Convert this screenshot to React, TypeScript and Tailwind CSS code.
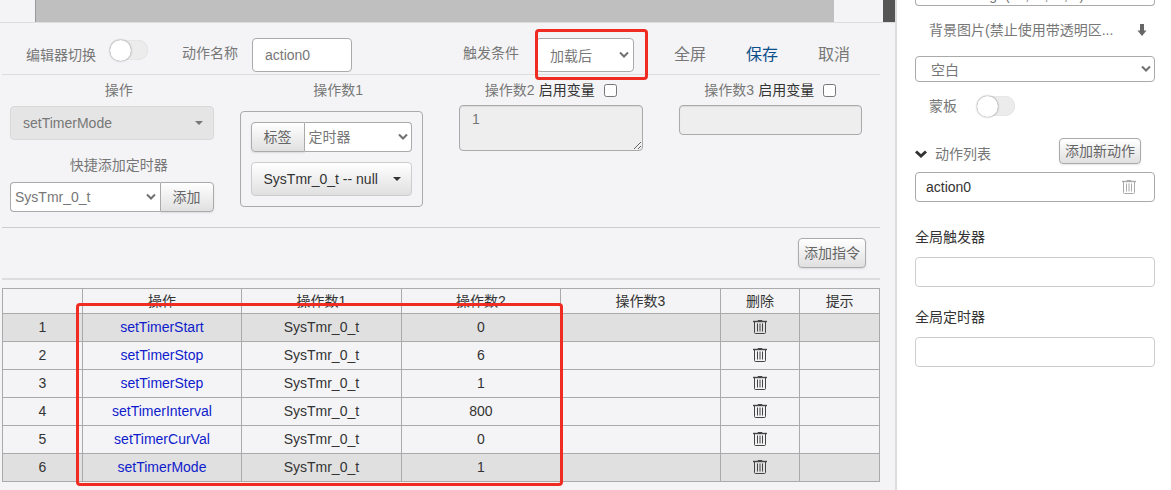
import { useState } from 'react';

const HAN = 'text-sm leading-5 text-[#777]';
const FIELD = 'rounded border border-[#aaa] bg-white text-sm text-[#777] outline-none';
const RAISED =
  'border border-[#aaa] bg-linear-to-b from-white to-[#e0e0e0] text-sm text-[#666] shadow-[0_1px_2px_rgba(0,0,0,0.1)]';
const CELL = 'border border-[#aaa] p-0 pb-0.5';

function Chevron({ className = '' }: { className?: string }) {
  return (
    <svg className={className} width="10" height="8" viewBox="0 0 10 8" fill="none" aria-hidden="true">
      <path d="M1 1.5 5 5.5 9 1.5" stroke="#707070" strokeWidth="2" />
    </svg>
  );
}

function Select({
  label,
  options,
  wrap = '',
  className = '',
  arrow = 'right-1',
}: {
  label: string;
  options: string[];
  wrap?: string;
  className?: string;
  arrow?: string;
}) {
  return (
    <span className={`relative flex items-center ${wrap}`}>
      <select aria-label={label} className={`w-full appearance-none ${FIELD} ${className}`}>
        {options.map((o) => (
          <option key={o}>{o}</option>
        ))}
      </select>
      <Chevron className={`pointer-events-none absolute ${arrow}`} />
    </span>
  );
}

function Toggle({ label }: { label: string }) {
  const [on, setOn] = useState(false);
  return (
    <label className="relative flex h-5 w-[38px] shrink-0 cursor-pointer items-center rounded-full bg-[#ececec] shadow-[inset_0_0_1px_rgba(0,0,0,0.2)]">
      <input
        type="checkbox"
        aria-label={label}
        checked={on}
        onChange={(e) => setOn(e.target.checked)}
        className="peer absolute inset-0 appearance-none"
      />
      <span className="pointer-events-none relative size-[21px] rounded-full bg-white shadow-[0_0_2px_rgba(0,0,0,0.55)] peer-checked:translate-x-[17px]" />
    </label>
  );
}

function Trash({ color }: { color: string }) {
  return (
    <svg width="14" height="16" viewBox="0 0 14 16" fill="none" stroke={color} aria-hidden="true">
      <path d="M0 2.5H14" strokeWidth="1.4" />
      <path d="M5 2V1.5H9V2" />
      <path d="M1.5 3V13.5Q1.5 14.5 2.5 14.5H11.5Q12.5 14.5 12.5 13.5V3" />
      <path d="M4.5 4.5V12.5M7 4.5V12.5M9.5 4.5V12.5" />
    </svg>
  );
}

function Caret({ className = '' }: { className?: string }) {
  return (
    <svg className={className} width="8" height="4" viewBox="0 0 8 4" fill="currentColor" aria-hidden="true">
      <path d="M0 0H8L4 4Z" />
    </svg>
  );
}

const ROWS = [
  ['setTimerStart', '0'],
  ['setTimerStop', '6'],
  ['setTimerStep', '1'],
  ['setTimerInterval', '800'],
  ['setTimerCurVal', '0'],
  ['setTimerMode', '1'],
];

const HEADS = ['', '操作', '操作数1', '操作数2', '操作数3', '删除', '提示'];

function Toolbar() {
  return (
    <div className="flex items-start justify-between border-b border-[#ddd] pt-[15px] pr-[30px] pb-0.5 pl-6">
      <div className="flex items-start">
        <span className={`mt-[7px] mr-3.5 ${HAN}`}>编辑器切换</span>
        <span className="mt-0.5">
          <Toggle label="编辑器切换" />
        </span>
        <label htmlFor="action-name" className={`mt-[5px] mr-3.5 ml-[34px] ${HAN}`}>
          动作名称
        </label>
        <input id="action-name" defaultValue="action0" className={`h-[34px] w-[100px] px-3 ${FIELD}`} />
      </div>
      <div className="flex items-start">
        <span className={`mt-[5px] mr-[17px] ${HAN}`}>触发条件</span>
        <span className="relative">
          <Select
            label="触发条件"
            options={['加载后', '加载前']}
            wrap="w-[98px]"
            className="h-[34px] pt-0.5 pl-[13px]"
            arrow="right-[5px]"
          />
          <span className="pointer-events-none absolute -top-[9px] -right-3.5 -bottom-2 -left-px rounded-sm border-3 border-[#ef2b22]" />
        </span>
        <div className="mt-[7px] ml-10 flex gap-10 text-base leading-5 text-[#777]">
          <button type="button">全屏</button>
          <button type="button" className="text-[#0b4f8a]">
            保存
          </button>
          <button type="button">取消</button>
        </div>
      </div>
    </div>
  );
}

function VariableLabel({ name, id }: { name: string; id: string }) {
  return (
    <div className="mb-[5px] flex h-5 items-center justify-center text-sm leading-5">
      <label htmlFor={id} className="text-[#777]">
        {name}
      </label>
      <label htmlFor={`${id}-var`} className="ml-1 text-[#333]">
        启用变量
      </label>
      <input id={`${id}-var`} type="checkbox" className="ml-[9px] size-[13px]" />
    </div>
  );
}

function Operands() {
  return (
    <div className="grid grid-cols-4 border-b border-[#ccc] pt-[5px] pb-[15px]">
      <div className="px-2">
        <div className={`pl-3.5 text-center ${HAN}`}>操作</div>
        <button
          type="button"
          className="mt-[6px] flex h-[34px] w-full items-center justify-between rounded border border-[#d9d9d9] bg-[#e5e5e5] pr-2.5 pl-3 text-sm text-[#777]"
        >
          setTimerMode
          <Caret />
        </button>
        <div className={`mt-[15px] pl-3.5 text-center ${HAN}`}>快捷添加定时器</div>
        <div className="mt-[7px] flex">
          <Select
            label="快捷添加定时器"
            options={['SysTmr_0_t']}
            wrap="min-w-0 flex-1"
            className="h-[30px] rounded-r-none border-r-0 pl-1"
          />
          <button type="button" className={`h-[30px] w-[54px] rounded-r ${RAISED}`}>
            添加
          </button>
        </div>
      </div>
      <div className="px-[18px]">
        <div className={`pl-3.5 text-center ${HAN}`}>操作数1</div>
        <div className="mt-[11px] rounded border border-[#aaa] p-2.5">
          <div className="flex">
            <button type="button" className={`h-[30px] w-[54px] rounded-l ${RAISED}`}>
              标签
            </button>
            <Select
              label="操作数1类型"
              options={['定时器', '变量']}
              wrap="min-w-0 flex-1"
              className="h-[30px] rounded-l-none border-l-0 pl-1"
            />
          </div>
          <button
            type="button"
            className="mt-2.5 flex h-[34px] w-full items-center justify-between rounded border border-[#ccc] bg-linear-to-b from-white to-[#e0e0e0] pr-2.5 pl-3 text-sm text-[#333]"
          >
            SysTmr_0_t -- null
            <Caret />
          </button>
        </div>
      </div>
      <div className="px-[18px]">
        <VariableLabel name="操作数2" id="op2" />
        <textarea
          id="op2"
          defaultValue="1"
          className="block h-[46px] w-full rounded border border-[#aaa] bg-[#eee] px-3 py-[3px] text-sm leading-5 text-[#777] shadow-[inset_0_1px_1px_rgba(0,0,0,0.08)]"
        />
      </div>
      <div className="px-[18px]">
        <VariableLabel name="操作数3" id="op3" />
        <input
          id="op3"
          className="block h-[30px] w-full rounded border border-[#aaa] bg-[#eee] px-3 text-sm text-[#777] shadow-[inset_0_1px_1px_rgba(0,0,0,0.08)]"
        />
      </div>
    </div>
  );
}

function Instructions() {
  return (
    <div className="relative mt-2">
      <table className="w-full table-fixed border-collapse text-center text-sm leading-5 text-[#333]">
        <colgroup>
          <col className="w-1/11" />
          <col className="w-2/11" />
          <col className="w-2/11" />
          <col className="w-2/11" />
          <col className="w-2/11" />
          <col className="w-1/11" />
          <col className="w-1/11" />
        </colgroup>
        <thead>
          <tr className="h-[25px]">
            {HEADS.map((h) => (
              <th key={h} className="border border-[#aaa] p-0 font-normal">
                {h}
              </th>
            ))}
          </tr>
        </thead>
        <tbody>
          {ROWS.map(([name, value], i) => (
            <tr key={name} className={`h-7 ${i === 0 || i === 5 ? 'bg-[#e0e0e0]' : ''}`}>
              <td className={CELL}>{i + 1}</td>
              <td className={CELL}>
                <a href="#" className="text-[#0f1ccc]">
                  {name}
                </a>
              </td>
              <td className={CELL}>SysTmr_0_t</td>
              <td className={CELL}>{value}</td>
              <td className={CELL} />
              <td className={CELL}>
                <button type="button" aria-label="删除" className="block w-full">
                  <span className="flex justify-center">
                    <Trash color="#444" />
                  </span>
                </button>
              </td>
              <td className={CELL} />
            </tr>
          ))}
        </tbody>
      </table>
      <span className="pointer-events-none absolute top-[15px] -bottom-1 left-[74px] w-[487px] rounded-sm border-3 border-[#ef2b22]" />
    </div>
  );
}

function Properties() {
  return (
    <aside className="w-[276px] shrink-0 border-l-2 border-[#ddd] bg-white pr-4 pl-[18px]">
      <div className="flex h-1.5 items-end overflow-hidden rounded-b border border-t-0 border-[#aaa] pl-[50px] text-sm leading-5 text-[#777]">
        Image(url,url,url,...)
      </div>
      <div className={`mt-3.5 flex items-center justify-between pr-2 pl-3.5 ${HAN}`}>
        <label htmlFor="bg">背景图片(禁止使用带透明区...</label>
        <svg width="10" height="12" viewBox="0 0 10 12" fill="#666" aria-hidden="true">
          <path d="M3 0H7V6.5H9.5L5 12L0.5 6.5H3Z" />
        </svg>
      </div>
      <Select label="背景图片" options={['空白']} wrap="mt-4" className="h-[26px] pt-0.5 pl-[15px]" />
      <div className="mt-3.5 flex items-center pl-3.5">
        <span className={`mr-5 ${HAN}`}>蒙板</span>
        <Toggle label="蒙板" />
      </div>
      <div className="mt-[22px] flex items-end pr-3.5">
        <div className="mr-auto flex items-center gap-2">
          <svg width="12" height="9" viewBox="0 0 12 9" fill="none" aria-hidden="true">
            <path d="M1 1.5 6 6 11 1.5" stroke="#333" strokeWidth="3" />
          </svg>
          <span className={HAN}>动作列表</span>
        </div>
        <button type="button" className={`h-[26px] rounded px-[5px] ${RAISED}`}>
          添加新动作
        </button>
      </div>
      <div className="mt-2 flex h-[30px] items-center justify-between rounded border border-[#aaa] pr-[18px] pl-2.5 text-sm text-[#333]">
        action0
        <button type="button" aria-label="删除 action0">
          <Trash color="#aaa" />
        </button>
      </div>
      <label htmlFor="g-trigger" className="mt-[25px] block text-sm leading-5 text-[#333]">
        全局触发器
      </label>
      <input id="g-trigger" className="mt-2.5 block h-[30px] w-full rounded border border-[#ccc] px-2 text-sm" />
      <label htmlFor="g-timer" className="mt-5 block text-sm leading-5 text-[#333]">
        全局定时器
      </label>
      <input id="g-timer" className="mt-2.5 block h-[30px] w-full rounded border border-[#ccc] px-2 text-sm" />
    </aside>
  );
}

export default function App() {
  return (
    <div className="flex min-h-screen bg-white font-['Liberation_Sans','Noto_Sans_CJK_SC',sans-serif]">
      <main className="min-w-0 flex-1 bg-[#f4f4f6]">
        <div className="flex h-[22px] justify-between pl-[35px]">
          <div className="mr-[49px] flex-1 border-l border-[#999] bg-[#bfbfbf]" />
          <div className="w-3 bg-[#555]" />
        </div>
        <div className="border-t border-[#ddd] pr-[15px] pl-0.5">
          <Toolbar />
          <Operands />
          <div className="flex justify-end border-b-2 border-[#ddd] py-2.5 pr-3.5">
            <button type="button" className={`h-[30px] rounded px-[5px] ${RAISED}`}>
              添加指令
            </button>
          </div>
          <Instructions />
        </div>
      </main>
      <Properties />
    </div>
  );
}
